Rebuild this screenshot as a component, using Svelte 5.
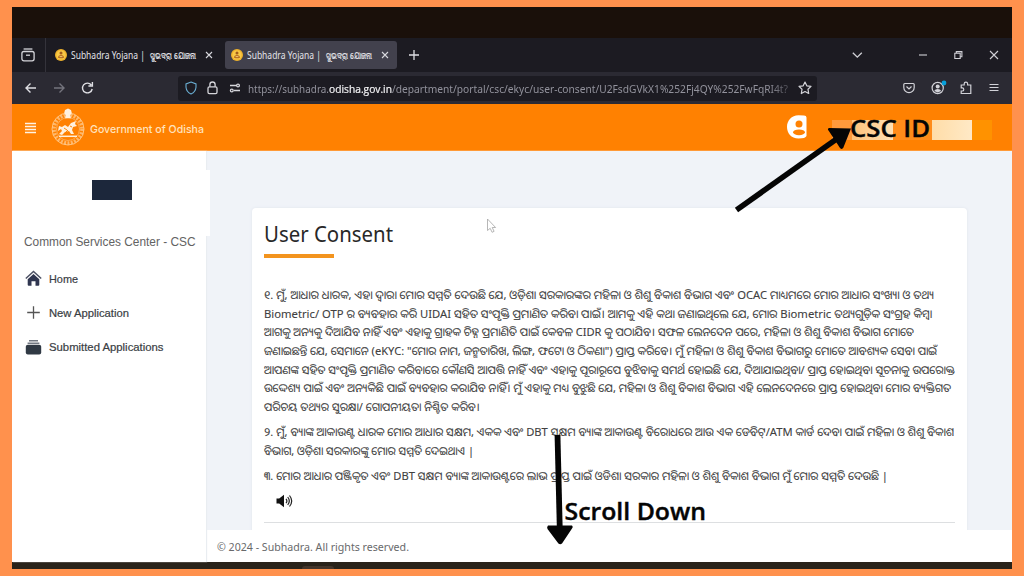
<script>
  const consent = [
    {
      gap: 0,
      lines: [
        ['୧. ମୁଁ, ଆଧାର ଧାରକ, ଏହା ଦ୍ୱାରା ମୋର ସମ୍ମତି ଦେଉଛି ଯେ, ଓଡ଼ିଶା ସରକାରଙ୍କର ମହିଳା ଓ ଶିଶୁ ବିକାଶ ବିଭାଗ ଏବଂ OCAC ମାଧ୍ୟମରେ ମୋର ଆଧାର ସଂଖ୍ୟା ଓ ତଥ୍ୟ', 670],
        ['Biometric/ OTP ର ବ୍ୟବହାର କରି UIDAI ସହିତ ସଂପୃକ୍ତି ପ୍ରମାଣିତ କରିବା ପାଇଁ। ଆମକୁ ଏହି କଥା ଜଣାଇଥିଲେ ଯେ, ମୋର Biometric ତଥ୍ୟଗୁଡ଼ିକ ସଂଗ୍ରହ କିମ୍ବା', 668],
        ['ଆଗକୁ ଅନ୍ୟକୁ ଦିଆଯିବ ନାହିଁ ଏବଂ ଏହାକୁ ଗ୍ରାହକ ଚିହ୍ନ ପ୍ରମାଣିତି ପାଇଁ କେବଳ CIDR କୁ ପଠାଯିବ। ସଫଳ ଲେନଦେନ ପରେ, ମହିଳା ଓ ଶିଶୁ ବିକାଶ ବିଭାଗ ମୋତେ', 650],
        ['ଜଣାଇଛନ୍ତି ଯେ, ସେମାନେ (eKYC: "ମୋର ନାମ, ଜନ୍ମତାରିଖ, ଲିଙ୍ଗ, ଫଟୋ ଓ ଠିକଣା") ପ୍ରାପ୍ତ କରିବେ। ମୁଁ ମହିଳା ଓ ଶିଶୁ ବିକାଶ ବିଭାଗରୁ ମୋତେ ଆବଶ୍ୟକ ସେବା ପାଇଁ', 673],
        ['ଆପଣଙ୍କ ସହିତ ସଂପୃକ୍ତି ପ୍ରମାଣିତ କରିବାରେ କୌଣସି ଆପତ୍ତି ନାହିଁ ଏବଂ ଏହାକୁ ପୂରାରୂପେ ବୁଝିବାକୁ ସମର୍ଥ ହୋଇଛି ଯେ, ଦିଆଯାଇଥିବା/ ପ୍ରାପ୍ତ ହୋଇଥିବା ସୂଚନାକୁ ଉପରୋକ୍ତ', 691],
        ['ଉଦ୍ଦେଶ୍ୟ ପାଇଁ ଏବଂ ଅନ୍ୟକିଛି ପାଇଁ ବ୍ୟବହାର କରାଯିବ ନାହିଁ। ମୁଁ ଏହାକୁ ମଧ୍ୟ ବୁଝୁଛି ଯେ, ମହିଳା ଓ ଶିଶୁ ବିକାଶ ବିଭାଗ ଏହି ଲେନଦେନରେ ପ୍ରାପ୍ତ ହୋଇଥିବା ମୋର ବ୍ୟକ୍ତିଗତ', 687],
        ['ପରିଚୟ ତଥ୍ୟର ସୁରକ୍ଷା/ ଗୋପନୀୟତା ନିଶ୍ଚିତ କରିବ।', 216]
      ]
    },
    {
      gap: 6.4,
      lines: [
        ['୨. ମୁଁ, ବ୍ୟାଙ୍କ ଆକାଉଣ୍ଟ ଧାରକ ମୋର ଆଧାର ସକ୍ଷମ, ଏକକ ଏବଂ DBT ସକ୍ଷମ ବ୍ୟାଙ୍କ ଆକାଉଣ୍ଟ ବିରୋଧରେ ଆଉ ଏକ ଡେବିଟ୍/ATM କାର୍ଡ ଦେବା ପାଇଁ ମହିଳା ଓ ଶିଶୁ ବିକାଶ', 690],
        ['ବିଭାଗ, ଓଡ଼ିଶା ସରକାରଙ୍କୁ ମୋର ସମ୍ମତି ଦେଇଥାଏ |', 210]
      ]
    },
    {
      gap: 6.4,
      lines: [
        ['୩. ମୋର ଆଧାର ପଞ୍ଜିକୃତ ଏବଂ DBT ସକ୍ଷମ ବ୍ୟାଙ୍କ ଆକାଉଣ୍ଟରେ ଲାଭ ପ୍ରାପ୍ତ ପାଇଁ ଓଡିଶା ସରକାର ମହିଳା ଓ ଶିଶୁ ବିକାଶ ବିଭାଗ ମୁଁ ମୋର ସମ୍ମତି ଦେଉଛି |', 624]
      ]
    }
  ];
</script>

{#snippet fit(text, width, kind, height, base)}
  <svg class="fit {kind}" {width} {height}><text x="0" y={base} textLength={width} lengthAdjust="spacingAndGlyphs">{text}</text></svg>
{/snippet}

{#snippet coin()}
  <svg class="coin" width="12" height="12" viewBox="0 0 12 12">
    <circle cx="6" cy="6" r="6" fill="#f0b32c" />
    <circle cx="6" cy="6" r="4.6" fill="#f9c947" />
    <circle cx="6" cy="3.9" r="1.5" fill="#a15c1c" />
    <path d="M3 8.7Q3.2 6 6 6T9 8.7Q6 10 3 8.7Z" fill="#b66c20" />
    <path d="M4.6 7.6h2.8" stroke="#fbe08a" stroke-width=".8" />
  </svg>
{/snippet}

{#snippet cross()}
  <svg width="8" height="8" viewBox="0 0 8 8" fill="none" stroke="#d8d8de" stroke-width="1.1"><path d="M1 1l6 6M7 1L1 7" /></svg>
{/snippet}

{#snippet tabLabel()}
  <div class="tablabel">{@render fit('Subhadra Yojana |', 74, 'tabtext', 16, 12)}{@render fit('ସୁଭଦ୍ରା ଯୋଜନା', 46, 'tabtext odia', 16, 11.5)}</div>
{/snippet}

<div class="frame">
  <div class="screen">
    <div class="desk"></div>
    <div class="tabs">
      <div class="view">
        <svg width="14" height="14" viewBox="0 0 14 14" fill="none" stroke="#d5d5da" stroke-width="1.3"><path d="M2.6 1h8.8" /><rect x=".9" y="3.5" width="12.2" height="9.3" rx="2" /><path d="M5 7.2h4" /></svg>
      </div>
      <div class="tab">{@render coin()}{@render tabLabel()}{@render cross()}</div>
      <div class="tab active">{@render coin()}{@render tabLabel()}{@render cross()}</div>
      <svg class="plus" width="10" height="10" viewBox="0 0 10 10" stroke="#dedee3" stroke-width="1.3"><path d="M5 0v10M0 5h10" /></svg>
      <svg class="window-buttons" width="148" height="14" viewBox="0 0 148 14" fill="none" stroke="#d0d0d6" stroke-width="1.1">
        <path d="M.8 4.7l4.5 4.5 4.5-4.5" stroke-width="1.3" />
        <path d="M67 7h8" />
        <path d="M102.8 5.2h5.4v5.3h-5.4zM104.3 5V3.6h5.6v5.2h-1.5" />
        <path d="M138 3l8 8M146 3l-8 8" />
      </svg>
    </div>
    <div class="toolbar">
      <svg class="nav" width="70" height="14" viewBox="0 0 70 14" fill="none" stroke-width="1.4">
        <path d="M11 7H1M5.5 2.5L1 7l4.5 4.5" stroke="#dedee3" />
        <path d="M29 7h10M34.5 2.5L39 7l-4.5 4.5" stroke="#74747d" />
        <path d="M66.3 4A4.9 4.9 0 1 0 67.2 8M67.4 1v4h-4" stroke="#dedee3" />
      </svg>
      <div class="address">
        <svg class="security" width="56" height="14" viewBox="0 0 56 14" fill="none" stroke="#d5d5da" stroke-width="1.3">
          <path d="M6 1l5 1.9v3.3Q10.6 10.8 6 13Q1.4 10.8 1 6.2V2.9Z" stroke="#6aaed2" stroke-width="1.1" />
          <rect x="23" y="5.8" width="9" height="6.8" rx="1.4" /><path d="M24.9 5.8V3.6a2.6 2.6 0 0 1 5.2 0v2.2" />
          <path d="M45 4.5h6M49 9.5H55" /><circle cx="53" cy="4.5" r="1.4" /><circle cx="46.8" cy="9.5" r="1.4" />
        </svg>
        <div class="url">
          {@render fit('https://subhadra.', 81, 'url-dim', 16, 12.5)}{@render fit('odisha.gov.in', 63, 'url-strong', 16, 12.5)}{@render fit('/department/portal/csc/ekyc/user-consent/U2FsdGVkX1%252Fj4QY%252FwFqRI4t?', 396, 'url-dim', 16, 12.5)}
        </div>
        <svg class="star" width="14" height="14" viewBox="0 0 14 14" fill="none" stroke="#d5d5da" stroke-width="1.2" stroke-linejoin="round"><path d="M7 1l1.8 3.8 4.2.6-3 2.9.7 4.2L7 10.5l-3.7 2 .7-4.2-3-2.9 4.2-.6Z" /></svg>
      </div>
      <svg class="tools" width="98" height="16" viewBox="0 0 98 16" fill="none" stroke="#d2d2d8" stroke-width="1.2">
        <path d="M1.8 3.5h8.4q1 0 1 1v3a5.2 5.2 0 0 1-10.4 0v-3q0-1 1-1ZM3.5 6.5L6 9l2.5-2.5" />
        <circle cx="34.7" cy="8" r="5.6" /><circle cx="34.7" cy="6.5" r="2" fill="#d2d2d8" stroke="none" /><path d="M31.2 11.1q1-2 3.5-2t3.5 2l-3.5 1.5z" fill="#d2d2d8" stroke="none" />
        <circle cx="41" cy="3" r="2.4" fill="#079fda" stroke="none" />
        <path d="M58.2 5h3V3.8a1.7 1.7 0 0 1 3.4 0V5h3.2v8.5h-9.6V11h1a1.6 1.6 0 0 0 0-3.2h-1z" />
        <path d="M86.5 4.5h9M86.5 7.5h9M86.5 10.5h9" />
      </svg>
    </div>

    <header>
      <svg class="menu" width="11" height="12" viewBox="0 0 11 12" stroke="#fff3e4" stroke-width="1.5"><path d="M0 1.5h11M0 4.5h11M0 7.5h11M0 10.5h11" /></svg>
      <svg class="emblem" width="34" height="38" viewBox="0 0 34 38" fill="none">
        <circle cx="17" cy="21" r="14" stroke="#ffdcb0" stroke-width="3.6" stroke-dasharray="2 1.4" opacity=".6" />
        <circle cx="17" cy="21" r="16" stroke="#ffd39d" stroke-width=".8" />
        <circle cx="17" cy="21" r="11.5" stroke="#ffd6a5" stroke-width=".5" />
        <path d="M14 2l3-1.6L20 2l.8 3-1.6 2.2.8 3h-6l.8-3L13.2 5z" fill="#fff1df" />
        <path d="M8 18l3 1 3-2 3 2 3-4 5-2-1 3 2 2-4 1-1 3 2 4h-3l-2-3-4 1-3 3-3-1 3-3-1-2-3 2z" fill="#fff0dc" />
        <path d="M8 28.3h18" stroke="#fff0dc" stroke-width="1.5" />
        <path d="M13 20l3 2M19 18l2 1M15 24l2-2" stroke="#ff8707" />
      </svg>
      {@render fit('Government of Odisha', 114, 'brand', 18, 13)}
      <svg class="account" width="22" height="26" viewBox="0 0 22 26">
        <path d="M17 1.5q2.5 0 2.5 2V22q-1 2.5-8 2.5C4 24.5 0 19 0 12.8S4.5 1.2 11.5 1.2Z" fill="#fff" />
        <circle cx="12" cy="10" r="3.5" fill="#ff8203" /><ellipse cx="12" cy="18.3" rx="6" ry="2.9" fill="#ff8203" />
      </svg>
      <div class="redacted"><i></i><i></i><i></i><i></i><i></i></div>
    </header>

    <div class="body">
      <aside>
        <div class="bulge"></div>
        <div class="avatar"></div>
        <div class="role">{@render fit('Common Services Center - CSC', 171.5, 'center-name', 18, 13)}</div>
        <nav>
          <div class="item">
            <svg width="17" height="17" viewBox="0 0 17 17"><path d="M.8 8.5L8.5 1.4l7.7 7.1" fill="none" stroke="#4d5265" stroke-width="1.5" /><path d="M2.7 9.3L8.5 4l5.8 5.3v5.5q0 1-1 1h-2.8v-4.5h-4v4.5H3.7q-1 0-1-1z" fill="#303650" /></svg>
            {@render fit('Home', 29, 'link', 16, 12)}
          </div>
          <div class="item">
            <svg width="17" height="17" viewBox="0 0 17 17"><path d="M8.5 2.2v12.6M2.2 8.5h12.6" stroke="#555" stroke-width="1.3" /></svg>
            {@render fit('New Application', 80, 'link', 16, 12)}
          </div>
          <div class="item">
            <svg width="17" height="17" viewBox="0 0 17 17"><path d="M4 1.8h9M2.6 4.2h11.8" stroke="#727882" stroke-width="1.6" /><rect x=".8" y="5.8" width="15.4" height="9.8" rx="2" fill="#303944" /></svg>
            {@render fit('Submitted Applications', 114.5, 'link', 16, 12)}
          </div>
        </nav>
      </aside>

      <div class="content">
        <main>
          <section class="card">
            {@render fit('User Consent', 129, 'title', 32, 24)}
            <div class="accent"></div>
            <div class="consent">
              {#each consent as part}
                <div class="part" style:margin-top="{part.gap}px">
                  {#each part.lines as [text, width]}
                    {@render fit(text, width, 'line', 18.7, 13.2)}
                  {/each}
                </div>
              {/each}
            </div>
            <svg class="speaker" width="18" height="14" viewBox="0 0 18 14" fill="none" stroke="#222" stroke-width="1.2">
              <path d="M.5 4.5h2.7L8 .8v12.4L3.2 9.5H.5z" fill="#111" stroke="none" />
              <path d="M10 4.8q1.8 2.2 0 4.4M11.7 3q3.2 4 0 8M13.5 1.5q4.4 5.5 0 11" />
            </svg>
            <div class="rule"></div>
          </section>
        </main>
        <footer>{@render fit('© 2024 - Subhadra. All rights reserved.', 192, 'copyright', 18, 13)}</footer>
      </div>
    </div>
    <div class="taskbar"><i></i></div>
  </div>

  <svg class="overlay" width="1024" height="576" viewBox="0 0 1024 576">
    <path d="M736.5 210L838 138" stroke="#050505" stroke-width="5.6" />
    <path d="M851 128.5L829 128q-2 1-.3 2.8L840 148q2 2 3.3-.2z" fill="#050505" />
    <path d="M557.5 435L559.8 530" stroke="#050505" stroke-width="5.8" />
    <path d="M548 525.5h24q1.6 1.5 0 3L562 543.5q-1.8 1.5-3.6 0L547.5 529q-1-2 .5-3.5z" fill="#050505" />
    <text x="850" y="137.3" textLength="80" lengthAdjust="spacingAndGlyphs">CSC ID</text>
    <text x="564.5" y="520" textLength="141.5" lengthAdjust="spacingAndGlyphs">Scroll Down</text>
    <path d="M487.5 219v11.5l2.7-2.2 1.9 4 2-1-1.9-3.8h3.4z" fill="#fff" stroke="#a5a5a5" stroke-width=".8" />
  </svg>
</div>

<style>
  :global(body) { margin: 0; overflow: hidden; }
  .frame { box-sizing: border-box; position: relative; width: 1024px; height: 576px; padding: 7px 12px; background: #ff914d; font-family: "Noto Sans", "Open Sans", sans-serif; }
  .screen { display: flex; flex-direction: column; height: 562px; overflow: hidden; background: #fff; }
  svg { display: block; flex: none; }
  .fit { overflow: visible; }
  .desk { height: 31px; background: #1a100a; flex: none; }
  .tabs { display: flex; align-items: center; height: 34px; background: #1c1b22; flex: none; }
  .view { box-sizing: border-box; width: 34px; height: 34px; margin-right: 3px; padding-left: 9px; border-right: 1px solid #34333b; display: flex; align-items: center; }
  .tab { box-sizing: border-box; width: 172px; height: 28px; margin-right: 4px; padding-left: 6px; border-radius: 3px; display: flex; align-items: center; }
  .tab.active { background: #42414d; }
  .tablabel { display: flex; gap: 5px; margin: 0 9px 0 4px; }
  .tabtext text { font: 10.5px "Noto Sans", sans-serif; fill: #e3e3e8; }
  .odia text { font-size: 9px; stroke: #e3e3e8; stroke-width: .2px; }
  .plus { margin-left: 8px; }
  .window-buttons { margin-left: auto; margin-right: 12px; }
  .toolbar { display: flex; align-items: center; height: 32px; background: #2b2a33; flex: none; }
  .nav { margin-left: 13px; width: 70px; }
  .address { box-sizing: border-box; width: 639px; height: 25px; margin-left: 83px; padding-left: 7px; border-radius: 3px; background: #1c1b22; display: flex; align-items: center; }
  .url { display: flex; margin-left: 7px; width: 541px; -webkit-mask-image: linear-gradient(to right, #000 96%, rgba(0, 0, 0, .4)); }
  .url-dim text { font: 10.5px "Noto Sans", sans-serif; fill: #92929c; }
  .url-strong text { font: 500 10.5px "Open Sans", sans-serif; fill: #f3f3f5; stroke: #f3f3f5; stroke-width: .2px; }
  .star { margin-left: 9px; }
  .tools { margin-left: auto; margin-right: 11px; }
  header { display: flex; align-items: center; height: 47px; box-sizing: border-box; background: #ff8101; border-bottom: 1px solid #ff9a37; flex: none; padding-left: 13px; }
  .menu { margin-top: 2px; }
  .emblem { margin-left: 15px; }
  .brand { margin: 4px 0 0 5px; }
  .brand text { font: 500 11px Inter, sans-serif; fill: #ffe2bd; }
  .account { margin-left: 583px; }
  .redacted { display: flex; margin: 5px 0 0 23px; height: 20px; }
  .redacted i { display: block; }
  .redacted i:nth-child(1) { width: 20px; background: #ff9a3c; }
  .redacted i:nth-child(2) { width: 41px; background: linear-gradient(90deg, #ffc179, #ffe1b5); }
  .redacted i:nth-child(3) { width: 39px; background: #ff8c1a; }
  .redacted i:nth-child(4) { width: 40px; background: linear-gradient(90deg, #ffdda8, #ffe9c6); }
  .redacted i:nth-child(5) { width: 20px; background: #ff9200; }
  .body { display: flex; height: 411px; flex: none; background: #f0f3f8; }
  aside { position: relative; width: 194px; height: 411px; background: #fff; box-shadow: 1px 0 1px #e9edf1; z-index: 1; }
  .bulge { position: absolute; left: 194px; top: 19px; width: 4px; height: 66px; background: #fff; }
  .avatar { width: 40px; height: 20px; margin: 29px 0 0 80px; background: #1c273b; }
  .role { margin: 33px 0 0 12px; }
  .center-name text { font: 12px "Liberation Sans", sans-serif; fill: #626262; }
  nav { margin-top: 10.5px; }
  .item { display: flex; align-items: center; gap: 7px; height: 34.3px; padding-left: 13px; }
  .link text { font: 11px "Liberation Sans", sans-serif; fill: #3a3e44; stroke: #3a3e44; stroke-width: .2px; }
  .content { width: 806px; height: 411px; display: flex; flex-direction: column; }
  main { height: 379px; overflow: hidden; padding: 57px 45px 0 46px; box-sizing: border-box; }
  .card { height: 340px; box-sizing: border-box; padding: 10px 12px; background: #fff; border-radius: 4px; box-shadow: 0 0 3px #dfe4ec; }
  .title text { font: 22px "Noto Sans", sans-serif; fill: #282828; }
  .accent { width: 70px; height: 4px; margin-top: 4px; background: #f3941e; }
  .consent { margin-top: 28px; }
  .line text { font: 11.5px "Noto Sans", "Noto Sans Oriya", sans-serif; fill: #404040; stroke: #404040; stroke-width: .1px; }
  .speaker { margin: 8px 0 0 12px; }
  .rule { height: 1px; margin-top: 14px; background: #dddfe1; }
  footer { box-sizing: border-box; height: 32px; padding: 8px 0 0 11px; background: #fff; }
  .copyright text { font: 11px "Noto Sans", sans-serif; fill: #68696b; }
  .taskbar { height: 7px; background: #29231a; flex: none; }
  .taskbar i { display: block; width: 32px; height: 3px; margin-left: 290px; position: relative; top: 4px; background: #43352b; border-radius: 3px 3px 0 0; }
  .overlay { position: absolute; left: 0; top: 0; pointer-events: none; z-index: 2; }
  .overlay text { font: 600 24px "Open Sans", "Noto Sans", sans-serif; fill: #050505; stroke: #050505; stroke-width: .4px; }
</style>
